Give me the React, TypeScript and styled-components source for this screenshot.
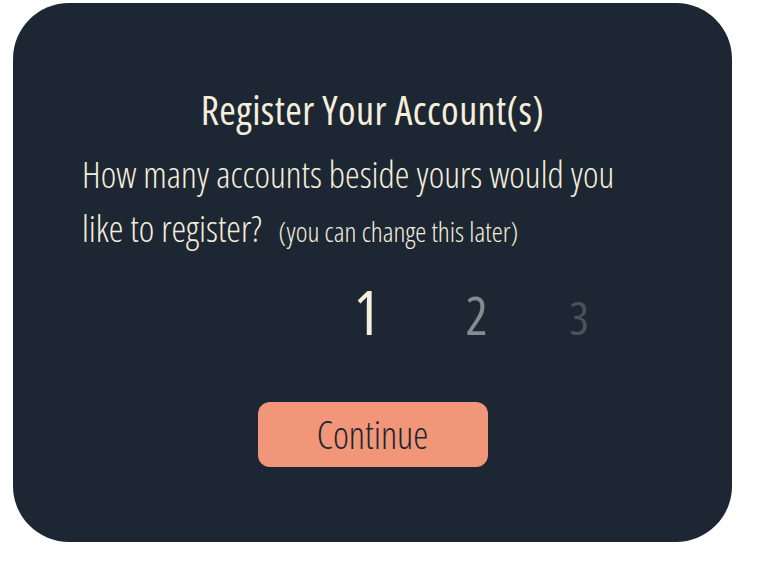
import React, { useState } from "react";
import styled, { createGlobalStyle } from "styled-components";

const GlobalStyle = createGlobalStyle`
  body {
    margin: 0;
    background: #ffffff;
    font-family: "Open Sans", "Liberation Sans", sans-serif;
    font-stretch: 75%;
  }
`;

const Page = styled.div`
  padding: 3px 0 0 13px;
`;

const Card = styled.section`
  width: 719px;
  height: 539px;
  box-sizing: border-box;
  background: #1d2633;
  border-radius: 56px;
  padding-top: 84px;
  display: flex;
  flex-direction: column;
  color: #f4eedb;
`;

const Title = styled.h1`
  margin: 0;
  font-size: 40px;
  line-height: 46px;
  font-weight: 400;
  text-align: center;
  letter-spacing: 0.4px;
`;

const Question = styled.p`
  margin: 14px 0 0;
  padding-left: 69px;
  font-size: 37px;
  line-height: 54px;
  font-weight: 300;
`;

const Hint = styled.span`
  margin-left: 10px;
  font-size: 28px;
  font-weight: 300;
`;

const NumberRow = styled.div`
  margin: 22px 0 0 302px;
  display: grid;
  grid-template-columns: 104px 115px 90px;
  align-items: baseline;
`;

const Num = styled.button<{ $size: number; $color: string }>`
  all: unset;
  cursor: pointer;
  text-align: center;
  font-family: inherit;
  font-stretch: 75%;
  font-weight: 400;
  font-size: ${(p) => p.$size}px;
  line-height: 62px;
  color: ${(p) => p.$color};
`;

const ContinueButton = styled.button`
  align-self: center;
  margin-top: 54px;
  width: 230px;
  height: 65px;
  border: none;
  border-radius: 12px;
  background: #f19678;
  color: #1d2633;
  font-family: inherit;
  font-stretch: 75%;
  font-weight: 300;
  font-size: 38px;
  line-height: 65px;
  padding: 0;
  cursor: pointer;
`;

const options = [
  { n: 1, size: 62, color: "#f4eedb" },
  { n: 2, size: 52, color: "#868b8f" },
  { n: 3, size: 46, color: "#4a525b" },
];

export default function App() {
  const [, setCount] = useState(1);
  return (
    <>
      <GlobalStyle />
      <Page>
        <Card>
          <Title>Register Your Account(s)</Title>
          <Question>
            How many accounts beside yours would you
            <br />
            like to register? <Hint>(you can change this later)</Hint>
          </Question>
          <NumberRow>
            {options.map((o) => (
              <Num key={o.n} $size={o.size} $color={o.color} onClick={() => setCount(o.n)}>
                {o.n}
              </Num>
            ))}
          </NumberRow>
          <ContinueButton>Continue</ContinueButton>
        </Card>
      </Page>
    </>
  );
}
